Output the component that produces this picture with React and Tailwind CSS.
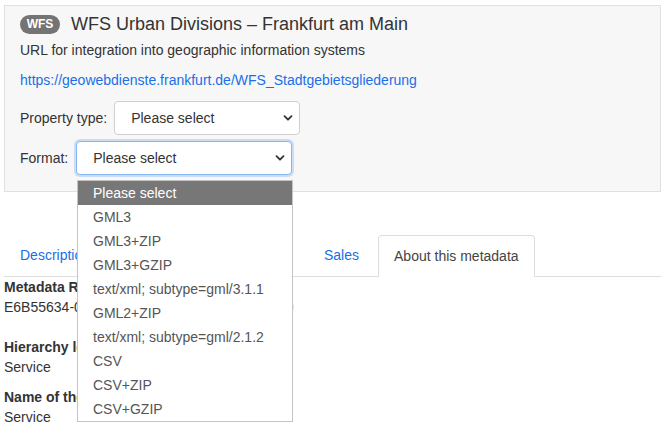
import { useState } from 'react';

const formats = [
  'Please select',
  'GML3',
  'GML3+ZIP',
  'GML3+GZIP',
  'text/xml; subtype=gml/3.1.1',
  'GML2+ZIP',
  'text/xml; subtype=gml/2.1.2',
  'CSV',
  'CSV+ZIP',
  'CSV+GZIP',
];

function Chevron() {
  return (
    <svg className="w-[10px] h-[10px]" viewBox="0 0 10 10" fill="none">
      <path d="M1.5 3.2L5 6.7L8.5 3.2" stroke="#333" strokeWidth="1.8" strokeLinecap="round" strokeLinejoin="round" />
    </svg>
  );
}

function FakeSelect({ width, focused, children }) {
  return (
    <div
      className={
        'h-[34px] flex items-center justify-between pl-[16px] pr-[6px] bg-white rounded-[4px] text-[14px] text-[#333] ' +
        width +
        (focused
          ? ' border border-[#86b7f0] shadow-[0_0_0_2px_rgba(120,170,240,0.35)]'
          : ' border border-[#cfcfcf]')
      }
    >
      <span>{children}</span>
      <Chevron />
    </div>
  );
}

export default function App() {
  const [active] = useState(1);

  return (
    <div className="relative w-[671px] h-[427px] overflow-hidden bg-white text-[#333] font-['Liberation_Sans',Arial,sans-serif]">
      {/* Panel */}
      <div className="ml-[4px] mt-[5px] w-[657px] bg-[#f7f7f7] border border-[#e0e0e0] pl-[15px] pt-[6px] pb-[16px]">
        <div className="flex items-center gap-[11px] h-[24px]">
          <span className="inline-flex items-center justify-center h-[19px] w-[40px] rounded-full bg-[#747474] text-white text-[12px] font-bold">
            WFS
          </span>
          <span className="text-[18px] text-[#333]">WFS Urban Divisions – Frankfurt am Main</span>
        </div>
        <div className="mt-[4px] h-[20px] leading-[20px] text-[14px]">URL for integration into geographic information systems</div>
        <div className="mt-[10px] h-[20px] leading-[20px] text-[14px]">
          <a className="text-[#1a6fe8]">https://geowebdienste.frankfurt.de/WFS_Stadtgebietsgliederung</a>
        </div>
        <div className="mt-[11px] flex items-center gap-[7px]">
          <span className="text-[14px]">Property type:</span>
          <FakeSelect width="w-[186px]">Please select</FakeSelect>
        </div>
        <div className="mt-[6px] flex items-center gap-[8px]">
          <span className="text-[14px]">Format:</span>
          <FakeSelect width="w-[216px]" focused>Please select</FakeSelect>
        </div>
      </div>

      {/* Tabs */}
      <div className="ml-[4px] mt-[43px] w-[657px] flex items-end border-b border-[#dedede] h-[42px] text-[14px]">
        <div className="px-[16px] h-[41px] flex items-center text-[#1a6fe8] w-[105px]">Description</div>
        <div className="h-[41px] w-[199px]" />
        <div className="px-[16px] h-[41px] flex items-center text-[#1a6fe8]">Sales</div>
        <div
          className={
            'ml-[3px] px-[15px] h-[42px] -mb-px flex items-center bg-white border border-b-0 border-[#dedede] rounded-t-[4px] ' +
            (active === 1 ? 'text-[#444]' : 'text-[#1a6fe8]')
          }
        >
          About this metadata
        </div>
      </div>

      {/* Metadata */}
      <div className="ml-[4px] text-[14px] leading-[20px]">
        <div className="font-bold">Metadata Record ID</div>
        <div>E6B55634-0A1F-4C2B-9D3E-7F21A8C4B5D0</div>
        <div className="mt-[20px] font-bold">Hierarchy level</div>
        <div>Service</div>
        <div className="mt-[10px] font-bold">Name of the hierarchy level</div>
        <div>Service</div>
      </div>

      {/* Open dropdown list */}
      <div className="absolute left-[77px] top-[180px] w-[216px] bg-white border border-[#c4c4c4] text-[14px]">
        {formats.map((f, i) => (
          <div
            key={f}
            className={
              'h-[24px] flex items-center pl-[15px] ' +
              (i === 0 ? 'bg-[#777777] text-white' : 'text-[#555]')
            }
          >
            {f}
          </div>
        ))}
      </div>
    </div>
  );
}
